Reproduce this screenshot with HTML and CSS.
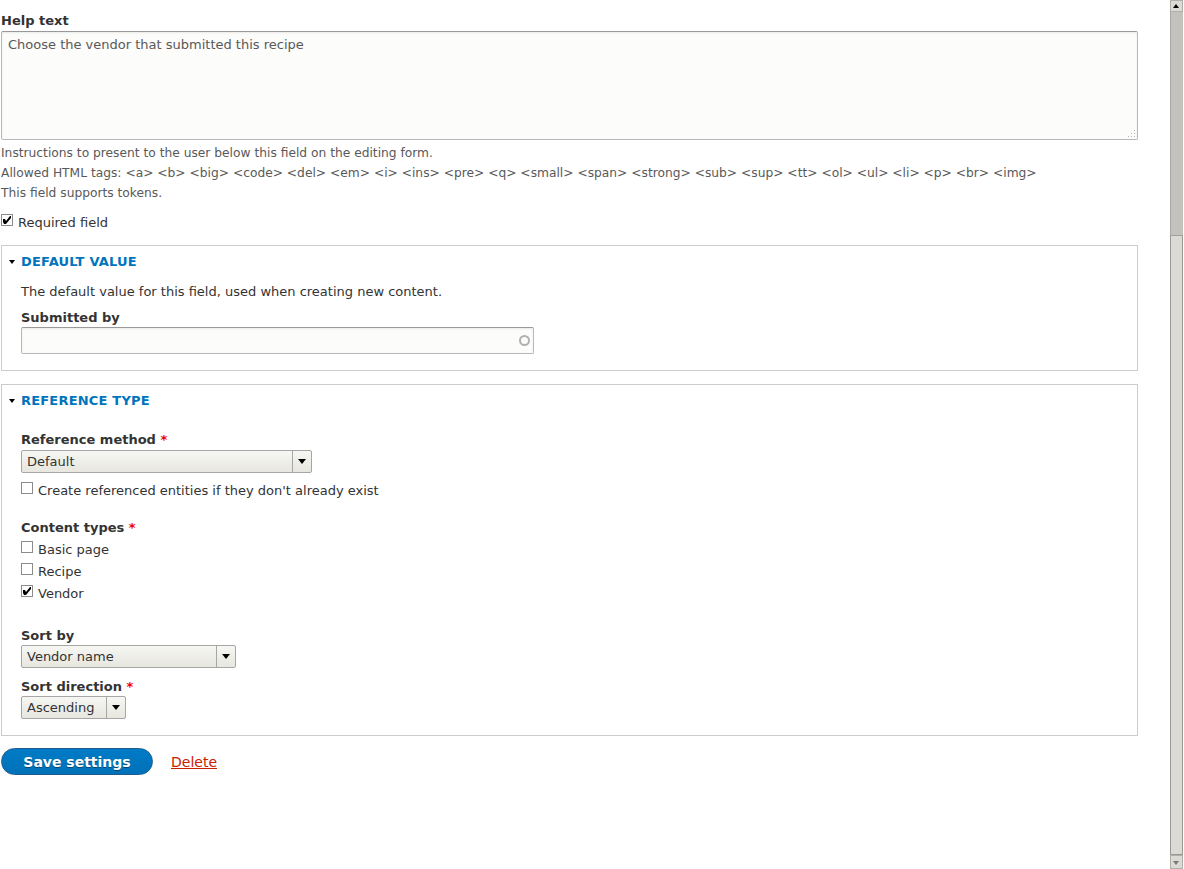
FILE: index.html
```html
<!DOCTYPE html>
<html>
  <head>
    <meta charset="UTF-8">
    <title>Field settings</title>
    <link rel="stylesheet" href="styles.css">
  </head>
  <body>
<div class="page">
  <div class="main">

    <div class="form-item">
      <label class="form-label">Help text</label>
      <div class="textarea-wrap">
        <div class="textarea">Choose the vendor that submitted this recipe</div>
        <svg class="grip" width="9" height="9" viewBox="0 0 9 9">
          <rect x="7" y="1" width="1" height="1" fill="#b8b8b8"/>
          <rect x="4" y="4" width="1" height="1" fill="#b8b8b8"/>
          <rect x="7" y="4" width="1" height="1" fill="#b8b8b8"/>
          <rect x="1" y="7" width="1" height="1" fill="#b8b8b8"/>
          <rect x="4" y="7" width="1" height="1" fill="#b8b8b8"/>
          <rect x="7" y="7" width="1" height="1" fill="#b8b8b8"/>
        </svg>
      </div>
      <div class="description">
        Instructions to present to the user below this field on the editing form.<br>
        Allowed HTML tags: &lt;a&gt; &lt;b&gt; &lt;big&gt; &lt;code&gt; &lt;del&gt; &lt;em&gt; &lt;i&gt; &lt;ins&gt; &lt;pre&gt; &lt;q&gt; &lt;small&gt; &lt;span&gt; &lt;strong&gt; &lt;sub&gt; &lt;sup&gt; &lt;tt&gt; &lt;ol&gt; &lt;ul&gt; &lt;li&gt; &lt;p&gt; &lt;br&gt; &lt;img&gt;<br>
        This field supports tokens.
      </div>
    </div>

    <div class="check-row required-row">
      <span class="checkbox checked"><svg width="10" height="10" viewBox="0 0 10 10"><path d="M1 4 L3 4 L4 6 L8 1 L9 1 L9 3 L4 9 L2 9 L1 7 Z" fill="#000"/></svg></span>
      <span>Required field</span>
    </div>

    <div class="fieldset">
      <div class="legend"><span class="arrow"></span>Default value</div>
      <div class="fieldset-body">
        <p class="fieldset-description">The default value for this field, used when creating new content.</p>
        <label class="form-label">Submitted by</label>
        <div class="autocomplete">
          <span class="throbber"></span>
        </div>
      </div>
    </div>

    <div class="fieldset">
      <div class="legend"><span class="arrow"></span>Reference type</div>
      <div class="fieldset-body">
        <label class="form-label label-method">Reference method <span class="req">*</span></label>
        <div class="select select-method"><span class="select-value">Default</span><span class="select-arrow"></span></div>
        <div class="check-row auto-create">
          <span class="checkbox"></span>
          <span>Create referenced entities if they don't already exist</span>
        </div>

        <label class="form-label label-types">Content types <span class="req">*</span></label>
        <div class="check-list">
          <div class="check-row">
            <span class="checkbox"></span>
            <span>Basic page</span>
          </div>
          <div class="check-row">
            <span class="checkbox"></span>
            <span>Recipe</span>
          </div>
          <div class="check-row">
            <span class="checkbox checked"><svg width="10" height="10" viewBox="0 0 10 10"><path d="M1 4 L3 4 L4 6 L8 1 L9 1 L9 3 L4 9 L2 9 L1 7 Z" fill="#000"/></svg></span>
            <span>Vendor</span>
          </div>
        </div>

        <label class="form-label label-sort">Sort by</label>
        <div class="select select-sort"><span class="select-value">Vendor name</span><span class="select-arrow"></span></div>

        <label class="form-label label-dir">Sort direction <span class="req">*</span></label>
        <div class="select select-dir"><span class="select-value">Ascending</span><span class="select-arrow"></span></div>
      </div>
    </div>

    <div class="actions">
      <button class="button button-primary">Save settings</button>
      <a href="#" class="delete-link">Delete</a>
    </div>

  </div>

  <div class="scrollbar">
    <div class="sb-btn sb-up"><span></span></div>
    <div class="sb-track"></div>
    <div class="sb-thumb"></div>
    <div class="sb-btn sb-down"><span></span></div>
  </div>
</div>
  </body>
</html>
```

FILE: styles.css
```css
*, ::after, ::before {
    box-sizing: border-box;
}

html, body {
    margin: 0;
    height: 100%;
    overflow: hidden;
    background: #fff;
    font-family: "DejaVu Sans", Verdana, sans-serif;
    font-size: 13px;
    color: #333;
}

.page {
    display: flex;
    height: 869px;
}

.main {
    flex: 1;
    padding: 12px 32px 0 1px;
}

/* labels */
.form-label {
    display: block;
    font-weight: bold;
    line-height: 18px;
    margin-bottom: 1px;
    color: #333;
}
.req {
    color: #e00;
}

/* textarea */
.textarea-wrap {
    position: relative;
}
.textarea {
    height: 109px;
    border: 1px solid #b8b8b8;
    border-top-color: #999;
    border-radius: 2px;
    background: #fcfcfa;
    padding: 4px 6px;
    line-height: 18px;
    color: #595959;
    box-shadow: inset 0 1px 2px rgba(0, 0, 0, .08);
}
.grip {
    position: absolute;
    right: 2px;
    bottom: 2px;
}

.description {
    margin-top: 3px;
    font-size: 12.25px;
    line-height: 20px;
    color: #595959;
}

/* checkboxes */
.check-row {
    display: flex;
    align-items: flex-start;
    line-height: 22px;
}
.checkbox {
    display: inline-flex;
    align-items: center;
    justify-content: center;
    width: 12px;
    height: 12px;
    margin-top: 2px;
    margin-right: 5px;
    border: 1px solid #8b8b8b;
    background: #fff;
    flex: none;
}
.checkbox svg {
    display: block;
}
.required-row {
    margin-top: 9px;
}

/* fieldsets */
.fieldset {
    border: 1px solid #ccc;
    margin-top: 11px;
}
.fieldset + .fieldset {
    margin-top: 13px;
}
.legend {
    padding: 6px 0 0 7px;
    line-height: 20px;
    color: #0074bd;
    font-weight: bold;
    letter-spacing: 0.2px;
    text-transform: uppercase;
    display: flex;
    align-items: center;
}
.arrow {
    width: 0;
    height: 0;
    border-left: 3.5px solid transparent;
    border-right: 3.5px solid transparent;
    border-top: 4px solid #000;
    margin-right: 6px;
}
.fieldset-body {
    padding: 0 19px 16px 19px;
}
.fieldset-description {
    margin: 10px 0 7px;
    line-height: 20px;
}

.autocomplete {
    position: relative;
    width: 513px;
    height: 27px;
    margin-top: -1px;
    border: 1px solid #b8b8b8;
    border-top-color: #999;
    border-radius: 2px;
    background: #fcfcfa;
    box-shadow: inset 0 1px 2px rgba(0, 0, 0, .08);
}
.throbber {
    position: absolute;
    right: 3px;
    top: 7px;
    width: 11px;
    height: 11px;
    border: 2px solid #b0b0b0;
    border-radius: 50%;
}

/* selects */
.select {
    display: flex;
    height: 23px;
    border: 1px solid #a6a6a6;
    border-radius: 2px;
    background: linear-gradient(#f6f6f3, #e7e7df);
    line-height: 21px;
    color: #333;
}
.select-value {
    flex: 1;
    padding-left: 5px;
}
.select-arrow {
    width: 19px;
    border-left: 1px solid #a6a6a6;
    position: relative;
}
.select-arrow::after {
    content: "";
    position: absolute;
    left: 5px;
    top: 8px;
    border-left: 4px solid transparent;
    border-right: 4px solid transparent;
    border-top: 5px solid #000;
}
.select-method {
    width: 291px;
}
.select-sort {
    width: 215px;
}
.select-dir {
    width: 105px;
}

.label-method {
    margin-top: 20px;
}
.auto-create {
    margin-top: 7px;
}
.label-types {
    margin-top: 17px;
    margin-bottom: 2px;
}
.label-sort {
    margin-top: 22px;
    margin-bottom: 0;
}
.label-dir {
    margin-top: 10px;
    margin-bottom: 0;
}

/* actions */
.actions {
    display: flex;
    align-items: center;
    margin-top: 12px;
}
.button {
    font-family: inherit;
    font-size: 14px;
    font-weight: bold;
    height: 27px;
    width: 152px;
    padding: 0;
    border-radius: 20px;
    cursor: pointer;
}
.button-primary {
    color: #fff;
    background: linear-gradient(#007bc6, #0071b8);
    border: 1px solid #1e5c90;
    text-shadow: 0 1px 0 rgba(0, 0, 0, .4);
}
.delete-link {
    margin-left: 18px;
    color: #c72100;
    font-size: 14px;
    text-decoration: underline;
}

/* fake scrollbar */
.scrollbar {
    width: 13px;
    margin-right: 1px;
    display: flex;
    flex-direction: column;
    background: #c3c2bd;
}
.sb-btn {
    background: #dcdad5;
    border: 1px solid #b1afaa;
    position: relative;
}
.sb-up {
    height: 12px;
}
.sb-down {
    height: 14px;
}
.sb-btn span {
    position: absolute;
    left: 2px;
    border-left: 3.5px solid transparent;
    border-right: 3.5px solid transparent;
}
.sb-up span {
    top: 3px;
    border-bottom: 4px solid #000;
}
.sb-down span {
    top: 5px;
    border-top: 4px solid #7a7a7a;
}
.sb-track {
    height: 223px;
    border-left: 1px solid #a9a7a2;
}
.sb-thumb {
    flex: 1;
    background: #dcdad5;
    border: 1px solid #9a9893;
    border-top-color: #a3a19c;
}
```
